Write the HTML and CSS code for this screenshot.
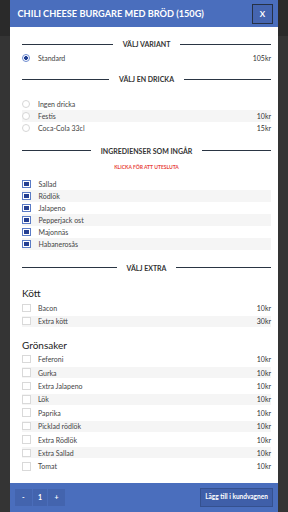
FILE: index.html
```html
<!DOCTYPE html>
<html lang="sv">
<head>
<meta charset="utf-8">
<title>Chili Cheese Burgare med bröd</title>
<link rel="stylesheet" href="styles.css">
</head>
<body>
<div class="modal">
  <header class="modal-header">
    <h1 class="modal-title">CHILI CHEESE BURGARE MED BRÖD (150G)</h1>
    <button class="close-btn" type="button">X</button>
  </header>

  <div class="modal-body">
    <section class="group group-variant">
      <h2 class="divider"><span>VÄLJ VARIANT</span></h2>
      <ul class="opts opts-variant">
        <li class="opt"><span class="radio checked"></span><span class="name">Standard</span><span class="price">105kr</span></li>
      </ul>
    </section>

    <section class="group group-drink">
      <h2 class="divider"><span>VÄLJ EN DRICKA</span></h2>
      <ul class="opts opts-drink">
        <li class="opt"><span class="radio"></span><span class="name">Ingen dricka</span><span class="price"></span></li>
        <li class="opt"><span class="radio"></span><span class="name">Festis</span><span class="price">10kr</span></li>
        <li class="opt"><span class="radio"></span><span class="name">Coca-Cola 33cl</span><span class="price">15kr</span></li>
      </ul>
    </section>

    <section class="group group-ingredients">
      <h2 class="divider"><span>INGREDIENSER SOM INGÅR</span></h2>
      <p class="hint">KLICKA FÖR ATT UTESLUTA</p>
      <ul class="opts opts-ingredients">
        <li class="opt"><span class="check checked"></span><span class="name">Sallad</span></li>
        <li class="opt"><span class="check checked"></span><span class="name">Rödlök</span></li>
        <li class="opt"><span class="check checked"></span><span class="name">Jalapeno</span></li>
        <li class="opt"><span class="check checked"></span><span class="name">Pepperjack ost</span></li>
        <li class="opt"><span class="check checked"></span><span class="name">Majonnäs</span></li>
        <li class="opt"><span class="check checked"></span><span class="name">Habanerosås</span></li>
      </ul>
    </section>

    <section class="group group-extra">
      <h2 class="divider"><span>VÄLJ EXTRA</span></h2>
      <div class="extra-groups">
        <div class="subgroup">
          <h3 class="subgroup-title">Kött</h3>
          <ul class="opts opts-extra">
            <li class="opt"><span class="check"></span><span class="name">Bacon</span><span class="price">10kr</span></li>
            <li class="opt"><span class="check"></span><span class="name">Extra kött</span><span class="price">30kr</span></li>
          </ul>
        </div>
        <div class="subgroup">
          <h3 class="subgroup-title">Grönsaker</h3>
          <ul class="opts opts-extra">
            <li class="opt"><span class="check"></span><span class="name">Feferoni</span><span class="price">10kr</span></li>
            <li class="opt"><span class="check"></span><span class="name">Gurka</span><span class="price">10kr</span></li>
            <li class="opt"><span class="check"></span><span class="name">Extra Jalapeno</span><span class="price">10kr</span></li>
            <li class="opt"><span class="check"></span><span class="name">Lök</span><span class="price">10kr</span></li>
            <li class="opt"><span class="check"></span><span class="name">Paprika</span><span class="price">10kr</span></li>
            <li class="opt"><span class="check"></span><span class="name">Picklad rödlök</span><span class="price">10kr</span></li>
            <li class="opt"><span class="check"></span><span class="name">Extra Rödlök</span><span class="price">10kr</span></li>
            <li class="opt"><span class="check"></span><span class="name">Extra Sallad</span><span class="price">10kr</span></li>
            <li class="opt"><span class="check"></span><span class="name">Tomat</span><span class="price">10kr</span></li>
          </ul>
        </div>
        <div class="subgroup">
          <h3 class="subgroup-title">Ost</h3>
          <ul class="opts opts-extra">
            <li class="opt"><span class="check"></span><span class="name">Cheddar</span><span class="price">10kr</span></li>
            <li class="opt"><span class="check"></span><span class="name">Extra Pepperjack ost</span><span class="price">10kr</span></li>
            <li class="opt"><span class="check"></span><span class="name">Halloumi</span><span class="price">15kr</span></li>
            <li class="opt"><span class="check"></span><span class="name">Blåmögelost</span><span class="price">10kr</span></li>
            <li class="opt"><span class="check"></span><span class="name">Mozzarella</span><span class="price">10kr</span></li>
            <li class="opt"><span class="check"></span><span class="name">Parmesan</span><span class="price">10kr</span></li>
          </ul>
        </div>
        <div class="subgroup">
          <h3 class="subgroup-title">Såser</h3>
          <ul class="opts opts-extra">
            <li class="opt"><span class="check"></span><span class="name">Aioli</span><span class="price">10kr</span></li>
            <li class="opt"><span class="check"></span><span class="name">Extra Majonnäs</span><span class="price">10kr</span></li>
            <li class="opt"><span class="check"></span><span class="name">Extra Habanerosås</span><span class="price">10kr</span></li>
            <li class="opt"><span class="check"></span><span class="name">Chipotlemajo</span><span class="price">10kr</span></li>
            <li class="opt"><span class="check"></span><span class="name">Tryffelmajo</span><span class="price">10kr</span></li>
            <li class="opt"><span class="check"></span><span class="name">BBQ-sås</span><span class="price">10kr</span></li>
            <li class="opt"><span class="check"></span><span class="name">Ketchup</span><span class="price">5kr</span></li>
          </ul>
        </div>
      </div>
    </section>
  </div>

  <footer class="modal-footer">
    <div class="qty">
      <button class="qty-btn" type="button">-</button>
      <span class="qty-val">1</span>
      <button class="qty-btn" type="button">+</button>
    </div>
    <button class="add-btn" type="button">Lägg till i kundvagnen</button>
  </footer>
</div>
</body>
</html>
```

FILE: styles.css
```css
* {
  box-sizing: border-box;
  margin: 0;
  padding: 0;
}

html,
body {
  height: 100%;
  overflow: hidden;
}

body {
  background: linear-gradient(#2a2a2a 0, #2a2a2a 36px, #343434 36px);
  font-family: Lato, "Noto Sans", "Liberation Sans", sans-serif;
  color: #444;
}

ul {
  list-style: none;
}

button {
  font-family: inherit;
  cursor: pointer;
}

/* ---------- modal ---------- */
.modal {
  margin: 0 10px;
  height: 512px;
  display: flex;
  flex-direction: column;
  background: #fff;
}

.modal-header {
  flex: none;
  height: 27px;
  background: #4a6ebd;
  display: flex;
  align-items: center;
  justify-content: space-between;
  padding: 0 5px 0 7.5px;
}

.modal-title {
  color: #fff;
  font-size: 9.2px;
  font-weight: 700;
  white-space: nowrap;
}

.close-btn {
  width: 21px;
  height: 20px;
  background: #4565b0;
  border: 1px solid #263145;
  color: #fff;
  font-size: 8px;
  font-weight: 700;
}

.modal-body {
  flex: none;
  height: 456px;
  overflow-y: auto;
  padding: 12px 7px 10px 12px;
}

.modal-body::-webkit-scrollbar {
  width: 4px;
}

.modal-body::-webkit-scrollbar-track {
  background: #fff;
}

.modal-body::-webkit-scrollbar-thumb {
  background: #c9c9c9;
  border-right: 1px solid #fff;
}

/* ---------- section dividers ---------- */
.divider {
  display: flex;
  align-items: center;
  height: 10px;
  font-size: 7px;
  font-weight: 700;
  color: #333;
}

.divider::before,
.divider::after {
  content: "";
  flex: 1;
  height: 1px;
  background: #2a3543;
}

.divider span {
  margin: 0 10px;
  white-space: nowrap;
}

.group-drink {
  margin-top: 10px;
}

.group-ingredients {
  margin-top: 12px;
}

.group-extra {
  margin-top: 13px;
}

.opts-variant {
  margin-top: 3px;
}

.opts-drink {
  margin-top: 13.7px;
}

.hint {
  margin-top: 7px;
  height: 8px;
  line-height: 8px;
  text-align: center;
  font-size: 5px;
  font-weight: 700;
  color: #e8453c;
}

.opts-ingredients {
  margin-top: 7.3px;
}

/* ---------- option rows ---------- */
.opt {
  display: flex;
  align-items: center;
  height: 12px;
  font-size: 7px;
  color: #444;
}

.opt:nth-child(even) {
  background: #f5f5f5;
}

.name {
  flex: 1;
  margin-left: 8px;
}

.price {
  color: #333;
}

.radio {
  flex: none;
  width: 8px;
  height: 8px;
  border-radius: 50%;
  border: 1px solid #d6d6d6;
  background: #fff;
}

.radio.checked {
  border-color: #6d8bd0;
  background: radial-gradient(circle, #1f3f94 0, #1f3f94 1.6px, #fff 2.2px);
}

.check {
  flex: none;
  width: 8.5px;
  height: 8.5px;
  border: 1px solid #d9d9d9;
  background: #fff;
}

.check.checked {
  border: 1px solid #5a7bc6;
  background: #243f92;
  box-shadow: inset 0 0 0 1px #fff;
}

/* ---------- extras ---------- */
.extra-groups {
  display: flex;
  flex-direction: column;
  gap: 9.6px;
  padding-top: 14.3px;
}

.subgroup {
  display: flex;
  flex-direction: column;
}

.subgroup-title {
  height: 12px;
  line-height: 12px;
  font-size: 10px;
  font-weight: 400;
  color: #222;
}

.opts-extra {
  display: flex;
  flex-direction: column;
  gap: 2.4px;
  margin-top: 3px;
  padding-bottom: 2.4px;
}

.opts-extra .opt {
  height: 11px;
}

.opts-extra .check {
  width: 9px;
  height: 8.5px;
}

.opts-extra .name {
  margin-left: 7px;
}

/* ---------- footer ---------- */
.modal-footer {
  flex: none;
  height: 29px;
  background: #4a6ebd;
  display: flex;
  align-items: center;
  justify-content: space-between;
  padding: 0 5px;
}

.qty {
  display: flex;
  height: 17px;
  background: #4364ae;
}

.qty-btn,
.qty-val {
  width: 16.67px;
  height: 17px;
  display: flex;
  align-items: center;
  justify-content: center;
  background: transparent;
  border: none;
  color: #fff;
  font-size: 7px;
  font-weight: 700;
  line-height: 1;
}

.qty-val {
  border-left: 1px solid #4a6dba;
  border-right: 1px solid #4a6dba;
}

.add-btn {
  width: 73px;
  height: 19px;
  background: #3f5fa9;
  border: 1px solid #35518f;
  color: #fff;
  font-size: 6.5px;
  font-weight: 700;
  line-height: 1;
}
```
